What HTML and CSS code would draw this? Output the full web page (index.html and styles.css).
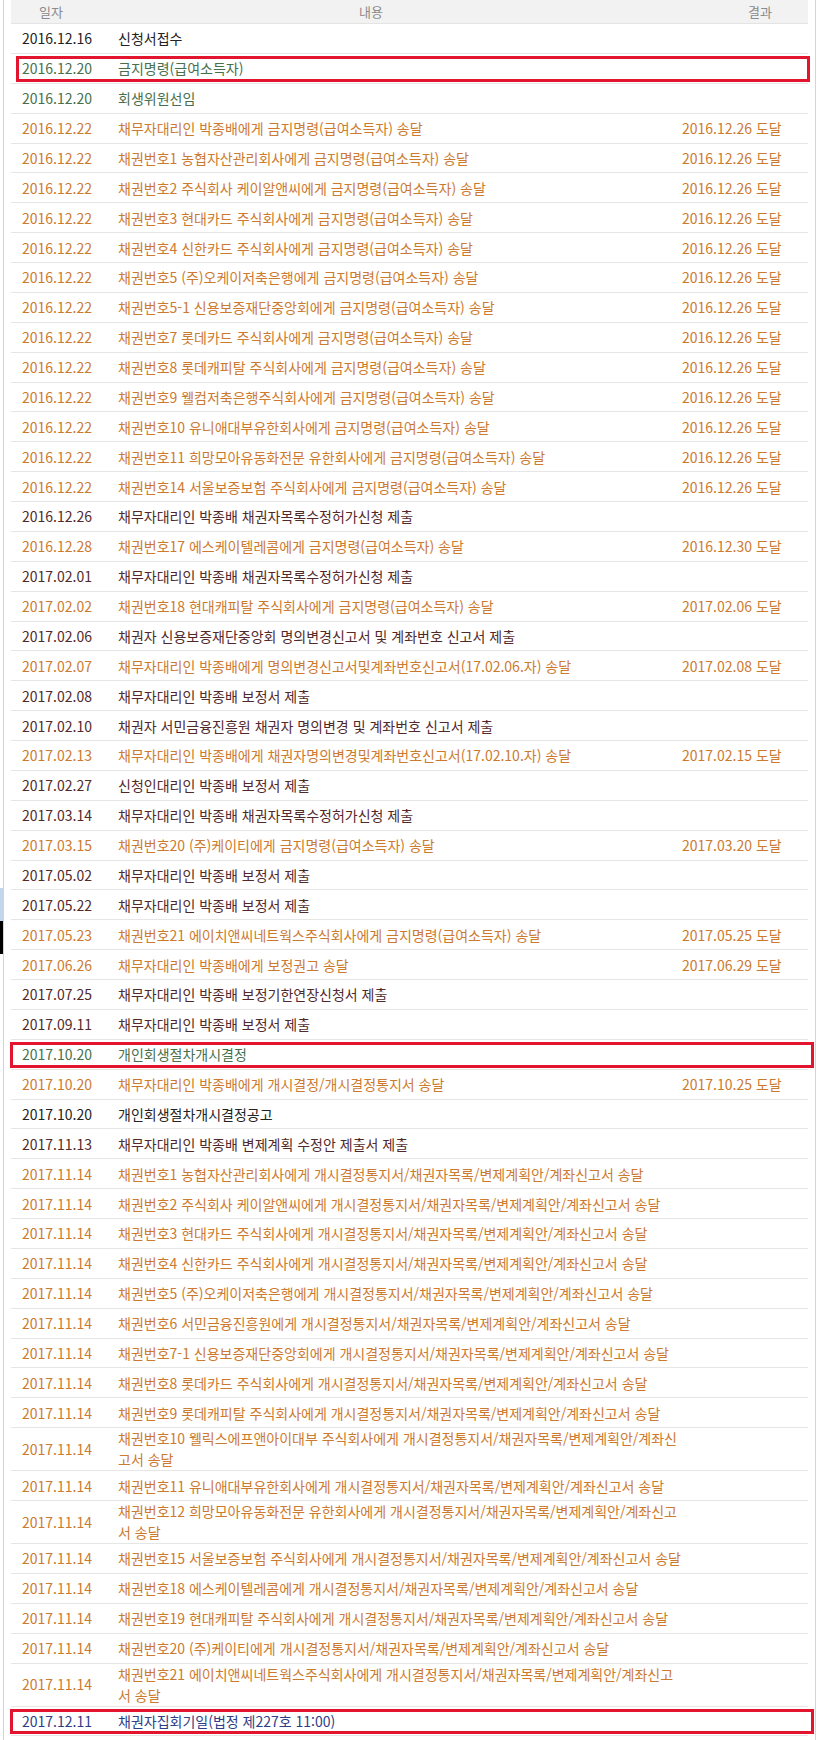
FILE: index.html
```html
<!DOCTYPE html>
<html lang="ko">
<head>
    <meta charset="UTF-8">
    <meta name="viewport" content="width=device-width, initial-scale=1.0">
    <title>사건진행내용</title>
    <link rel="stylesheet" href="styles.css">
</head>
<body>

    <div class="edge"></div>

    <div class="wrap">
        <div class="head">
            <div class="h-date">일자</div>
            <div class="h-text">내용</div>
            <div class="h-res">결과</div>
        </div>

        <div class="row k"><div>2016.12.16</div><div>신청서접수</div><div></div></div>
        <div class="row g mark m1"><div>2016.12.20</div><div>금지명령(급여소득자)</div><div></div></div>
        <div class="row g"><div>2016.12.20</div><div>회생위원선임</div><div></div></div>
        <div class="row o"><div>2016.12.22</div><div>채무자대리인 박종배에게 금지명령(급여소득자) 송달</div><div>2016.12.26 도달</div></div>
        <div class="row o"><div>2016.12.22</div><div>채권번호1 농협자산관리회사에게 금지명령(급여소득자) 송달</div><div>2016.12.26 도달</div></div>
        <div class="row o"><div>2016.12.22</div><div>채권번호2 주식회사 케이알앤씨에게 금지명령(급여소득자) 송달</div><div>2016.12.26 도달</div></div>
        <div class="row o"><div>2016.12.22</div><div>채권번호3 현대카드 주식회사에게 금지명령(급여소득자) 송달</div><div>2016.12.26 도달</div></div>
        <div class="row o"><div>2016.12.22</div><div>채권번호4 신한카드 주식회사에게 금지명령(급여소득자) 송달</div><div>2016.12.26 도달</div></div>
        <div class="row o"><div>2016.12.22</div><div>채권번호5 (주)오케이저축은행에게 금지명령(급여소득자) 송달</div><div>2016.12.26 도달</div></div>
        <div class="row o"><div>2016.12.22</div><div>채권번호5-1 신용보증재단중앙회에게 금지명령(급여소득자) 송달</div><div>2016.12.26 도달</div></div>
        <div class="row o"><div>2016.12.22</div><div>채권번호7 롯데카드 주식회사에게 금지명령(급여소득자) 송달</div><div>2016.12.26 도달</div></div>
        <div class="row o"><div>2016.12.22</div><div>채권번호8 롯데캐피탈 주식회사에게 금지명령(급여소득자) 송달</div><div>2016.12.26 도달</div></div>
        <div class="row o"><div>2016.12.22</div><div>채권번호9 웰컴저축은행주식회사에게 금지명령(급여소득자) 송달</div><div>2016.12.26 도달</div></div>
        <div class="row o"><div>2016.12.22</div><div>채권번호10 유니애대부유한회사에게 금지명령(급여소득자) 송달</div><div>2016.12.26 도달</div></div>
        <div class="row o"><div>2016.12.22</div><div>채권번호11 희망모아유동화전문 유한회사에게 금지명령(급여소득자) 송달</div><div>2016.12.26 도달</div></div>
        <div class="row o"><div>2016.12.22</div><div>채권번호14 서울보증보험 주식회사에게 금지명령(급여소득자) 송달</div><div>2016.12.26 도달</div></div>
        <div class="row d"><div>2016.12.26</div><div>채무자대리인 박종배 채권자목록수정허가신청 제출</div><div></div></div>
        <div class="row o"><div>2016.12.28</div><div>채권번호17 에스케이텔레콤에게 금지명령(급여소득자) 송달</div><div>2016.12.30 도달</div></div>
        <div class="row d"><div>2017.02.01</div><div>채무자대리인 박종배 채권자목록수정허가신청 제출</div><div></div></div>
        <div class="row o"><div>2017.02.02</div><div>채권번호18 현대캐피탈 주식회사에게 금지명령(급여소득자) 송달</div><div>2017.02.06 도달</div></div>
        <div class="row d"><div>2017.02.06</div><div>채권자 신용보증재단중앙회 명의변경신고서 및 계좌번호 신고서 제출</div><div></div></div>
        <div class="row o"><div>2017.02.07</div><div>채무자대리인 박종배에게 명의변경신고서및계좌번호신고서(17.02.06.자) 송달</div><div>2017.02.08 도달</div></div>
        <div class="row d"><div>2017.02.08</div><div>채무자대리인 박종배 보정서 제출</div><div></div></div>
        <div class="row d"><div>2017.02.10</div><div>채권자 서민금융진흥원 채권자 명의변경 및 계좌번호 신고서 제출</div><div></div></div>
        <div class="row o"><div>2017.02.13</div><div>채무자대리인 박종배에게 채권자명의변경및계좌번호신고서(17.02.10.자) 송달</div><div>2017.02.15 도달</div></div>
        <div class="row d"><div>2017.02.27</div><div>신청인대리인 박종배 보정서 제출</div><div></div></div>
        <div class="row d"><div>2017.03.14</div><div>채무자대리인 박종배 채권자목록수정허가신청 제출</div><div></div></div>
        <div class="row o"><div>2017.03.15</div><div>채권번호20 (주)케이티에게 금지명령(급여소득자) 송달</div><div>2017.03.20 도달</div></div>
        <div class="row d"><div>2017.05.02</div><div>채무자대리인 박종배 보정서 제출</div><div></div></div>
        <div class="row d"><div>2017.05.22</div><div>채무자대리인 박종배 보정서 제출</div><div></div></div>
        <div class="row o"><div>2017.05.23</div><div>채권번호21 에이치앤씨네트웍스주식회사에게 금지명령(급여소득자) 송달</div><div>2017.05.25 도달</div></div>
        <div class="row o"><div>2017.06.26</div><div>채무자대리인 박종배에게 보정권고 송달</div><div>2017.06.29 도달</div></div>
        <div class="row d"><div>2017.07.25</div><div>채무자대리인 박종배 보정기한연장신청서 제출</div><div></div></div>
        <div class="row d"><div>2017.09.11</div><div>채무자대리인 박종배 보정서 제출</div><div></div></div>
        <div class="row g mark"><div>2017.10.20</div><div>개인회생절차개시결정</div><div></div></div>
        <div class="row o"><div>2017.10.20</div><div>채무자대리인 박종배에게 개시결정/개시결정통지서 송달</div><div>2017.10.25 도달</div></div>
        <div class="row k"><div>2017.10.20</div><div>개인회생절차개시결정공고</div><div></div></div>
        <div class="row d"><div>2017.11.13</div><div>채무자대리인 박종배 변제계획 수정안 제출서 제출</div><div></div></div>
        <div class="row o"><div>2017.11.14</div><div>채권번호1 농협자산관리회사에게 개시결정통지서/채권자목록/변제계획안/계좌신고서 송달</div><div></div></div>
        <div class="row o"><div>2017.11.14</div><div>채권번호2 주식회사 케이알앤씨에게 개시결정통지서/채권자목록/변제계획안/계좌신고서 송달</div><div></div></div>
        <div class="row o"><div>2017.11.14</div><div>채권번호3 현대카드 주식회사에게 개시결정통지서/채권자목록/변제계획안/계좌신고서 송달</div><div></div></div>
        <div class="row o"><div>2017.11.14</div><div>채권번호4 신한카드 주식회사에게 개시결정통지서/채권자목록/변제계획안/계좌신고서 송달</div><div></div></div>
        <div class="row o"><div>2017.11.14</div><div>채권번호5 (주)오케이저축은행에게 개시결정통지서/채권자목록/변제계획안/계좌신고서 송달</div><div></div></div>
        <div class="row o"><div>2017.11.14</div><div>채권번호6 서민금융진흥원에게 개시결정통지서/채권자목록/변제계획안/계좌신고서 송달</div><div></div></div>
        <div class="row o"><div>2017.11.14</div><div>채권번호7-1 신용보증재단중앙회에게 개시결정통지서/채권자목록/변제계획안/계좌신고서 송달</div><div></div></div>
        <div class="row o"><div>2017.11.14</div><div>채권번호8 롯데카드 주식회사에게 개시결정통지서/채권자목록/변제계획안/계좌신고서 송달</div><div></div></div>
        <div class="row o"><div>2017.11.14</div><div>채권번호9 롯데캐피탈 주식회사에게 개시결정통지서/채권자목록/변제계획안/계좌신고서 송달</div><div></div></div>
        <div class="row o tall"><div>2017.11.14</div><div>채권번호10 웰릭스에프앤아이대부 주식회사에게 개시결정통지서/채권자목록/변제계획안/계좌신<br>고서 송달</div><div></div></div>
        <div class="row o"><div>2017.11.14</div><div>채권번호11 유니애대부유한회사에게 개시결정통지서/채권자목록/변제계획안/계좌신고서 송달</div><div></div></div>
        <div class="row o tall"><div>2017.11.14</div><div>채권번호12 희망모아유동화전문 유한회사에게 개시결정통지서/채권자목록/변제계획안/계좌신고<br>서 송달</div><div></div></div>
        <div class="row o"><div>2017.11.14</div><div>채권번호15 서울보증보험 주식회사에게 개시결정통지서/채권자목록/변제계획안/계좌신고서 송달</div><div></div></div>
        <div class="row o"><div>2017.11.14</div><div>채권번호18 에스케이텔레콤에게 개시결정통지서/채권자목록/변제계획안/계좌신고서 송달</div><div></div></div>
        <div class="row o"><div>2017.11.14</div><div>채권번호19 현대캐피탈 주식회사에게 개시결정통지서/채권자목록/변제계획안/계좌신고서 송달</div><div></div></div>
        <div class="row o"><div>2017.11.14</div><div>채권번호20 (주)케이티에게 개시결정통지서/채권자목록/변제계획안/계좌신고서 송달</div><div></div></div>
        <div class="row o tall"><div>2017.11.14</div><div>채권번호21 에이치앤씨네트웍스주식회사에게 개시결정통지서/채권자목록/변제계획안/계좌신고<br>서 송달</div><div></div></div>
        <div class="row b mark"><div>2017.12.11</div><div>채권자집회기일(법정 제227호 11:00)</div><div></div></div>
    </div>

</body>
</html>
```

FILE: styles.css
```css
body {
    font-family: "Noto Sans CJK KR", "Noto Sans", sans-serif;
    font-size: 14px;
    background-color: #fff;
    margin: 0;
    position: relative;
}

.wrap {
    margin: 0 4px 0 3px;
    padding: 0 7px;
    border-left: 1px solid #d4d4d4;
    border-right: 1px solid #d4d4d4;
    min-height: 1740px;
    box-sizing: border-box;
}

/* header */
.head {
    display: grid;
    grid-template-columns: 107px 1fr 147px;
    height: 23px;
    align-items: center;
    background-color: #f2f2f2;
    border-bottom: 1px solid #e4e4e4;
    color: #8a8a8a;
    font-size: 13px;
}

.h-date {
    padding-left: 28px;
}

.h-text {
    padding-left: 241px;
}

.h-res {
    padding-left: 87px;
}

/* rows */
.row {
    display: grid;
    grid-template-columns: 107px 1fr 147px;
    align-items: center;
    padding: 7.44px 0;
    line-height: 14px;
    border-bottom: 1px solid #e6e6e6;
    position: relative;
    white-space: nowrap;
}

.row.tall {
    padding: 0;
    line-height: 21px;
}

.row > div:first-child {
    padding-left: 11px;
}

.row > div:last-child {
    padding-left: 21px;
}

.k { color: #222; }
.d { color: #52292a; }
.o { color: #cc7a30; }
.g { color: #46704c; }
.b { color: #2c3e88; }

/* red marker boxes */
.mark::after {
    content: "";
    position: absolute;
    left: -1px;
    right: -6px;
    top: 2px;
    bottom: 1px;
    border: 3px solid #e3142d;
}

.mark.m1::after {
    left: 5px;
    right: -2px;
}

.edge {
    position: absolute;
    left: 0;
    top: 888px;
    width: 3px;
    height: 66px;
    background: linear-gradient(#c4d6ec 0 50%, #000 50% 100%);
}
```
